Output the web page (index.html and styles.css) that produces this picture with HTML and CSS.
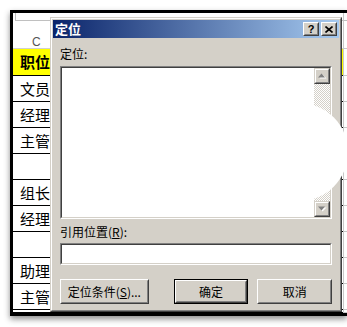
FILE: index.html
```html
<!DOCTYPE html>
<html>
<head>
<meta charset="utf-8">
<link rel="stylesheet" href="styles.css">
</head>
<body>
<div class="sheet">
  <div class="row r-top"><div class="c"></div><div class="d"></div></div>
  <div class="row r-hdr"><div class="c">C</div><div class="d"></div></div>
  <div class="row r-first"><div class="c hl">职位</div><div class="d"></div></div>
  <div class="row"><div class="c">文员</div><div class="d"></div></div>
  <div class="row"><div class="c">经理</div><div class="d"></div></div>
  <div class="row"><div class="c">主管</div><div class="d"></div></div>
  <div class="row"><div class="c"></div><div class="d"></div></div>
  <div class="row"><div class="c">组长</div><div class="d"></div></div>
  <div class="row"><div class="c">经理</div><div class="d"></div></div>
  <div class="row"><div class="c"></div><div class="d"></div></div>
  <div class="row"><div class="c">助理</div><div class="d"></div></div>
  <div class="row"><div class="c">主管</div><div class="d"></div></div>
  <div class="row r-last"><div class="c"></div><div class="d"></div></div>
</div>

<div class="dialog">
  <div class="dlg-in">
    <div class="titlebar">
      <span class="title">定位</span>
      <div class="cap-btns">
        <div class="cap-btn"><div class="cap-in"><span class="q">?</span></div></div>
        <div class="cap-btn"><div class="cap-in">
          <svg width="8" height="7" viewBox="0 0 8 7"><path d="M0.5 0.5 L7.5 6.5 M7.5 0.5 L0.5 6.5" stroke="#000" stroke-width="1.6" fill="none"/></svg>
        </div></div>
      </div>
    </div>
    <div class="dlg-body">
      <div class="label">定位:</div>
      <div class="sunken list">
        <div class="sunken-in list-in">
          <div class="list-area"></div>
          <div class="vscroll">
            <div class="sbtn"><div class="sbtn-in">
              <svg width="9" height="6" viewBox="0 0 9 6"><path d="M0.5 4.5 L3.5 0.5 L7.5 4.5 Z" fill="#fff" transform="translate(1,1)"/><path d="M0 4.5 L3.5 0.5 L7 4.5 Z" fill="#808080"/></svg>
            </div></div>
            <div class="track"></div>
            <div class="sbtn"><div class="sbtn-in">
              <svg width="9" height="6" viewBox="0 0 9 6"><path d="M0.5 0.5 L7.5 0.5 L3.5 4.5 Z" fill="#fff" transform="translate(1,1)"/><path d="M0 0.5 L7 0.5 L3.5 4.5 Z" fill="#808080"/></svg>
            </div></div>
          </div>
        </div>
      </div>
      <div class="label lbl2">引用位置(<u>R</u>):</div>
      <div class="sunken input"><div class="sunken-in input-in"></div></div>
      <div class="btn-row">
        <div class="btn wide"><div class="btn-in">定位条件(<u>S</u>)...</div></div>
        <div class="btn default"><div class="btn-mid"><div class="btn-in">确定</div></div></div>
        <div class="btn"><div class="btn-in">取消</div></div>
      </div>
    </div>
  </div>
</div>

<div class="blob"></div>
</body>
</html>
```

FILE: styles.css
```css
html, body {
  margin: 0;
  padding: 0;
}
body {
  width: 347px;
  height: 327px;
  overflow: hidden;
  background: #fff;
  position: relative;
  font-family: "Noto Sans CJK SC", "Liberation Sans", sans-serif;
}

/* spreadsheet behind the dialog */
.sheet {
  margin: 10px 0 0 10px;
  width: 334px;
  height: 300px;
  border-top: 3px solid #000;
  border-left: 3px solid #000;
  border-bottom: 3px solid #000;
  display: flex;
  flex-direction: column;
  overflow: hidden;
  box-shadow: 0 3px 6px rgba(0, 0, 0, 0.45);
}
.row {
  display: flex;
  height: 26px;
  flex: none;
}
.row .c {
  width: 330px;
  box-sizing: border-box;
  border-bottom: 1px solid #000;
  padding-left: 7px;
  font-size: 15px;
  line-height: 25px;
  color: #000;
  white-space: nowrap;
}
.row .d {
  flex: 1;
  border-left: 1px solid #c8c8c8;
  border-bottom: 1px solid #c8c8c8;
}
.r-top {
  height: 8px;
}
.r-top .c {
  margin-left: 2px;
  width: 328px;
  border-left: 1px solid #c0c0c0;
  border-bottom: 1px solid #c0c0c0;
}
.r-top .d {
  border-bottom-color: #c0c0c0;
}
.r-hdr {
  height: 28px;
}
.r-hdr .c {
  border-bottom: 1px solid #d0d0d0;
  font-family: "Liberation Sans", sans-serif;
  font-size: 12px;
  color: #555;
  padding-left: 19px;
  line-height: 42px;
}
.r-first {
  height: 27px;
}
.r-first .c {
  line-height: 26px;
}
.hl {
  background: #ffff00;
  font-weight: bold;
}
.r-last {
  flex: 1;
}

/* dialog window */
.dialog {
  position: absolute;
  left: 50px;
  top: 17px;
  width: 292px;
  height: 295px;
  box-sizing: border-box;
  border: 1px solid;
  border-color: #d4d0c8 #404040 #404040 #d4d0c8;
  background: #d4d0c8;
}
.dlg-in {
  height: 100%;
  box-sizing: border-box;
  border: 1px solid;
  border-color: #fff #808080 #808080 #fff;
  padding: 1px;
  display: flex;
  flex-direction: column;
}
.titlebar {
  height: 18px;
  flex: none;
  background: linear-gradient(to right, #0a246a, #a6caf0);
  display: flex;
  align-items: center;
  justify-content: space-between;
  padding: 0 2px 0 2px;
}
.title {
  color: #fff;
  font-weight: bold;
  font-size: 13px;
  line-height: 18px;
}
.cap-btns {
  display: flex;
  gap: 2px;
}
.cap-btn {
  width: 16px;
  height: 14px;
  box-sizing: border-box;
  border: 1px solid;
  border-color: #fff #404040 #404040 #fff;
  background: #d4d0c8;
}
.cap-in {
  height: 100%;
  box-sizing: border-box;
  border: 1px solid;
  border-color: #d4d0c8 #808080 #808080 #d4d0c8;
  display: flex;
  align-items: center;
  justify-content: center;
}
.q {
  font-family: "Liberation Sans", sans-serif;
  font-weight: bold;
  font-size: 11px;
  line-height: 10px;
  color: #000;
}

.dlg-body {
  flex: 1;
  padding: 9px 7px 0 7px;
  display: flex;
  flex-direction: column;
}
.label {
  font-size: 12px;
  line-height: 14px;
  height: 14px;
  color: #000;
  white-space: nowrap;
}
.lbl2 {
  margin-top: 6px;
}
.sunken {
  box-sizing: border-box;
  border: 1px solid;
  border-color: #808080 #fff #fff #808080;
}
.sunken-in {
  height: 100%;
  box-sizing: border-box;
  border: 1px solid;
  border-color: #404040 #d4d0c8 #d4d0c8 #404040;
  background: #fff;
}
.list {
  margin-top: 5px;
  height: 153px;
}
.list-in {
  display: flex;
}
.list-area {
  flex: 1;
}
.vscroll {
  width: 16px;
  display: flex;
  flex-direction: column;
}
.sbtn {
  height: 16px;
  flex: none;
  box-sizing: border-box;
  border: 1px solid;
  border-color: #d4d0c8 #404040 #404040 #d4d0c8;
  background: #d4d0c8;
}
.sbtn-in {
  height: 100%;
  box-sizing: border-box;
  border: 1px solid;
  border-color: #fff #808080 #808080 #fff;
  display: flex;
  align-items: center;
  justify-content: center;
}
.track {
  flex: 1;
  background-color: #fff;
  background-image: conic-gradient(#fff 25%, #d4d0c8 0 50%, #fff 0 75%, #d4d0c8 0);
  background-size: 2px 2px;
}
.input {
  margin-top: 4px;
  height: 22px;
}

.btn-row {
  margin-top: 14px;
  display: flex;
  gap: 9px;
}
.btn {
  width: 75px;
  height: 25px;
  box-sizing: border-box;
  border: 1px solid;
  border-color: #fff #404040 #404040 #fff;
  background: #d4d0c8;
}
.btn.wide {
  width: 89px;
  margin-right: 16px;
}
.btn-in {
  height: 100%;
  box-sizing: border-box;
  border: 1px solid;
  border-color: #d4d0c8 #808080 #808080 #d4d0c8;
  font-size: 12px;
  line-height: 21px;
  text-align: center;
  color: #000;
  white-space: nowrap;
}
.btn.default {
  border-color: #000;
}
.btn-mid {
  height: 100%;
  box-sizing: border-box;
  border: 1px solid;
  border-color: #fff #404040 #404040 #fff;
}
.btn.default .btn-in {
  line-height: 19px;
}

/* white smudge over the right edge */
.blob {
  position: absolute;
  left: 250px;
  top: 103px;
  width: 98px;
  height: 98px;
  border-radius: 50%;
  background: #fff;
}
```
